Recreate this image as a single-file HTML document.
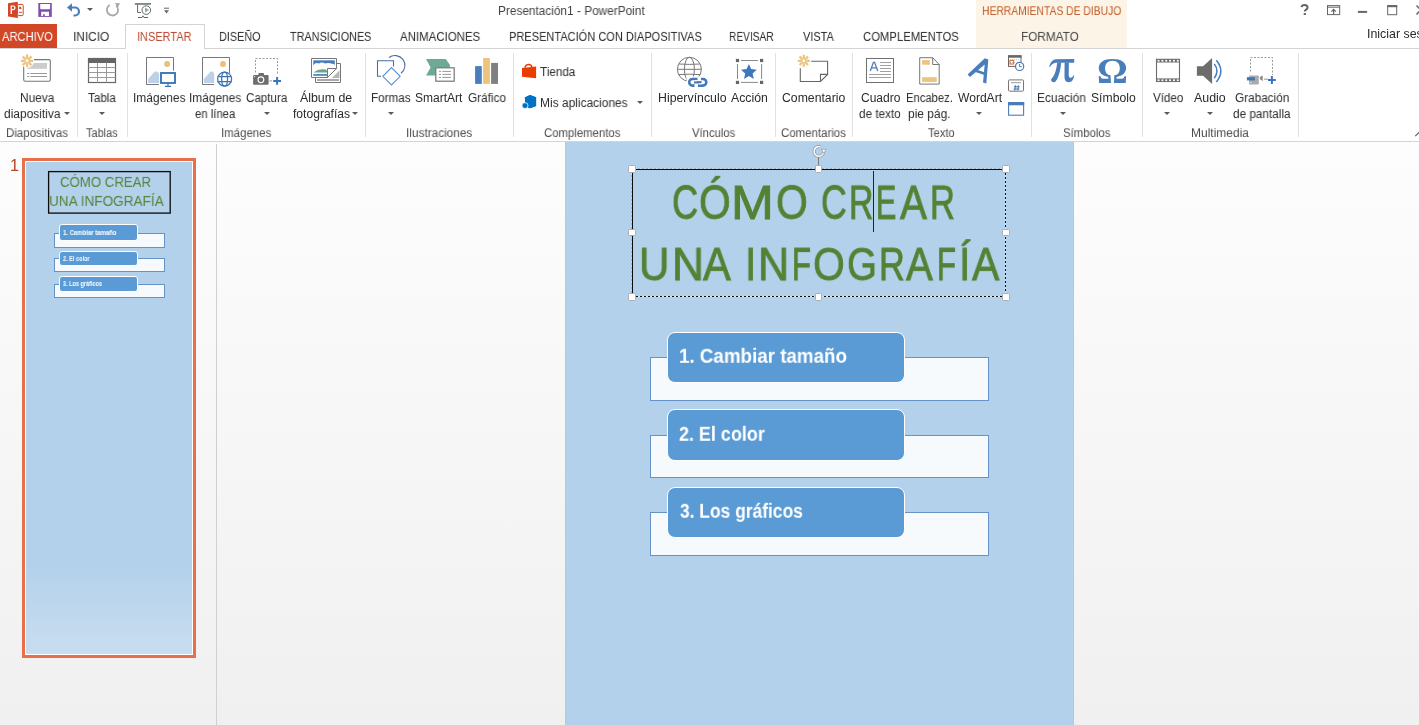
<!DOCTYPE html>
<html><head><meta charset="utf-8">
<style>
html,body{margin:0;padding:0;width:1419px;height:725px;overflow:hidden;background:#fff;}
body{position:relative;font-family:"Liberation Sans",sans-serif;}
.t{position:absolute;white-space:nowrap;will-change:transform;}
svg{position:absolute;overflow:visible}
</style></head><body>
<div style="position:absolute;left:0;top:142px;width:216px;height:583px;background:linear-gradient(#FDFDFD,#F0F0F0)"></div>
<div style="position:absolute;left:216px;top:144px;width:1px;height:581px;background:#D0D0D0"></div>
<div style="position:absolute;left:217px;top:142px;width:1202px;height:583px;background:linear-gradient(#FDFDFD,#F0F0F0)"></div>
<div style="position:absolute;left:565px;top:142px;width:509px;height:600px;background:#BFC7CE"></div>
<div style="position:absolute;left:566px;top:142px;width:507px;height:600px;background:#B4D1EB;overflow:hidden"><span class="t" style="left:105.90px;top:38.900000000000006px;font-size:45px;line-height:45px;color:#548235;transform:scale(0.8074,1.0530);transform-origin:0 38px;-webkit-text-stroke:0.9px #548235;">C</span>
<span class="t" style="left:133.14px;top:38.900000000000006px;font-size:45px;line-height:45px;color:#548235;transform:scale(0.9045,1.0530);transform-origin:0 38px;-webkit-text-stroke:0.9px #548235;">Ó</span>
<span class="t" style="left:165.23px;top:38.900000000000006px;font-size:45px;line-height:45px;color:#548235;transform:scale(1.1427,1.0530);transform-origin:0 38px;-webkit-text-stroke:0.9px #548235;">M</span>
<span class="t" style="left:210.33px;top:38.900000000000006px;font-size:45px;line-height:45px;color:#548235;transform:scale(0.9078,1.0530);transform-origin:0 38px;-webkit-text-stroke:0.9px #548235;">O</span>
<span class="t" style="left:255.13px;top:38.900000000000006px;font-size:45px;line-height:45px;color:#548235;transform:scale(0.7934,1.0530);transform-origin:0 38px;-webkit-text-stroke:0.9px #548235;">C</span>
<span class="t" style="left:282.98px;top:38.900000000000006px;font-size:45px;line-height:45px;color:#548235;transform:scale(0.7495,1.0530);transform-origin:0 38px;-webkit-text-stroke:0.9px #548235;">R</span>
<span class="t" style="left:310.35px;top:38.900000000000006px;font-size:45px;line-height:45px;color:#548235;transform:scale(0.6765,1.0530);transform-origin:0 38px;-webkit-text-stroke:0.9px #548235;">E</span>
<span class="t" style="left:333.57px;top:38.900000000000006px;font-size:45px;line-height:45px;color:#548235;transform:scale(0.8949,1.0530);transform-origin:0 38px;-webkit-text-stroke:0.9px #548235;">A</span>
<span class="t" style="left:364.12px;top:38.900000000000006px;font-size:45px;line-height:45px;color:#548235;transform:scale(0.7682,1.0530);transform-origin:0 38px;-webkit-text-stroke:0.9px #548235;">R</span>
<span class="t" style="left:72.91px;top:99.60000000000002px;font-size:45px;line-height:45px;color:#548235;transform:scale(0.9351,1.0465);transform-origin:0 38px;-webkit-text-stroke:0.9px #548235;">U</span>
<span class="t" style="left:105.71px;top:99.60000000000002px;font-size:45px;line-height:45px;color:#548235;transform:scale(0.9859,1.0465);transform-origin:0 38px;-webkit-text-stroke:0.9px #548235;">N</span>
<span class="t" style="left:136.97px;top:99.60000000000002px;font-size:45px;line-height:45px;color:#548235;transform:scale(0.9251,1.0465);transform-origin:0 38px;-webkit-text-stroke:0.9px #548235;">A</span>
<span class="t" style="left:178.83px;top:99.60000000000002px;font-size:45px;line-height:45px;color:#548235;transform:scale(0.8983,1.0465);transform-origin:0 38px;-webkit-text-stroke:0.9px #548235;">I</span>
<span class="t" style="left:191.51px;top:99.60000000000002px;font-size:45px;line-height:45px;color:#548235;transform:scale(0.9581,1.0465);transform-origin:0 38px;-webkit-text-stroke:0.9px #548235;">N</span>
<span class="t" style="left:226.20px;top:99.60000000000002px;font-size:45px;line-height:45px;color:#548235;transform:scale(0.6908,1.0465);transform-origin:0 38px;-webkit-text-stroke:0.9px #548235;">F</span>
<span class="t" style="left:246.53px;top:99.60000000000002px;font-size:45px;line-height:45px;color:#548235;transform:scale(0.9078,1.0465);transform-origin:0 38px;-webkit-text-stroke:0.9px #548235;">O</span>
<span class="t" style="left:280.72px;top:99.60000000000002px;font-size:45px;line-height:45px;color:#548235;transform:scale(0.8576,1.0465);transform-origin:0 38px;-webkit-text-stroke:0.9px #548235;">G</span>
<span class="t" style="left:313.12px;top:99.60000000000002px;font-size:45px;line-height:45px;color:#548235;transform:scale(0.7945,1.0465);transform-origin:0 38px;-webkit-text-stroke:0.9px #548235;">R</span>
<span class="t" style="left:340.07px;top:99.60000000000002px;font-size:45px;line-height:45px;color:#548235;transform:scale(0.8916,1.0465);transform-origin:0 38px;-webkit-text-stroke:0.9px #548235;">A</span>
<span class="t" style="left:371.10px;top:99.60000000000002px;font-size:45px;line-height:45px;color:#548235;transform:scale(0.6908,1.0465);transform-origin:0 38px;-webkit-text-stroke:0.9px #548235;">F</span>
<span class="t" style="left:392.73px;top:99.60000000000002px;font-size:45px;line-height:45px;color:#548235;transform:scale(0.8983,1.0465);transform-origin:0 38px;-webkit-text-stroke:0.9px #548235;">Í</span>
<span class="t" style="left:405.77px;top:99.60000000000002px;font-size:45px;line-height:45px;color:#548235;transform:scale(0.9117,1.0465);transform-origin:0 38px;-webkit-text-stroke:0.9px #548235;">A</span>
<div style="position:absolute;left:84px;top:215px;width:339px;height:44px;background:#F7FAFD;border:1px solid #6593C8;box-sizing:border-box"></div>
<div style="position:absolute;left:101px;top:190px;width:238px;height:51px;background:#5B9BD5;border:1px solid #fff;border-radius:8px;box-sizing:border-box"></div>
<span class="t" style="left:112.72px;top:205px;font-size:19px;line-height:19px;color:#fff;font-weight:bold;transform:scale(0.9878,1.0710);transform-origin:0 16px;">1. Cambiar tamaño</span>
<div style="position:absolute;left:84px;top:293px;width:339px;height:43px;background:#F7FAFD;border:1px solid #6593C8;box-sizing:border-box"></div>
<div style="position:absolute;left:101px;top:267px;width:238px;height:52px;background:#5B9BD5;border:1px solid #fff;border-radius:8px;box-sizing:border-box"></div>
<span class="t" style="left:113.27px;top:283px;font-size:19px;line-height:19px;color:#fff;font-weight:bold;transform:scale(0.9449,1.0710);transform-origin:0 16px;">2. El color</span>
<div style="position:absolute;left:84px;top:370px;width:339px;height:44px;background:#F7FAFD;border:1px solid #6593C8;box-sizing:border-box"></div>
<div style="position:absolute;left:101px;top:345px;width:238px;height:51px;background:#5B9BD5;border:1px solid #fff;border-radius:8px;box-sizing:border-box"></div>
<span class="t" style="left:113.50px;top:360px;font-size:19px;line-height:19px;color:#fff;font-weight:bold;transform:scale(0.9160,1.0710);transform-origin:0 16px;">3. Los gráficos</span></div>
<div style="position:absolute;left:632px;top:168px;width:374px;height:1px;background:repeating-linear-gradient(90deg,#C9D9E8 0 2.5px,#9FB6CA 2.5px 4px)"></div>
<div style="position:absolute;left:631px;top:169px;width:1px;height:128px;background:repeating-linear-gradient(180deg,#C9D9E8 0 2.5px,#9FB6CA 2.5px 4px)"></div>
<div style="position:absolute;left:632px;top:169px;width:374px;height:1px;background:#0D0D0D"></div>
<div style="position:absolute;left:632px;top:169px;width:1px;height:128px;background:#0D0D0D"></div>
<div style="position:absolute;left:632px;top:296px;width:374px;height:1px;background:repeating-linear-gradient(90deg,#0D0D0D 0 2.5px,#D8E4EE 2.5px 4px)"></div>
<div style="position:absolute;left:1005px;top:169px;width:1px;height:128px;background:repeating-linear-gradient(180deg,#0D0D0D 0 2.5px,#D8E4EE 2.5px 4px)"></div>
<div style="position:absolute;left:818px;top:157px;width:1px;height:9px;background:#7A7A7A"></div>
<svg style="left:810px;top:143px" width="18" height="17" viewBox="810 143 18 17"><path d="M823.7 150.7 A4.85 4.85 0 1 1 820.6 146.9" fill="none" stroke="#8A9199" stroke-width="2.9"/><path d="M823.7 150.7 A4.85 4.85 0 1 1 820.6 146.9" fill="none" stroke="#fff" stroke-width="1.5"/><path d="M821.3 149.3 L826.3 149.3 L823.8 153.2 Z" fill="#fff" stroke="#8A9199" stroke-width="0.7"/></svg>
<div style="position:absolute;left:628.2px;top:165.2px;width:7.6px;height:7.6px;box-sizing:border-box;border:1px solid #A8AEB4;background:#fff;border-radius:1.5px"></div>
<div style="position:absolute;left:628.2px;top:228.9px;width:7.6px;height:7.6px;box-sizing:border-box;border:1px solid #A8AEB4;background:#fff;border-radius:1.5px"></div>
<div style="position:absolute;left:628.2px;top:293.1px;width:7.6px;height:7.6px;box-sizing:border-box;border:1px solid #A8AEB4;background:#fff;border-radius:1.5px"></div>
<div style="position:absolute;left:814.7px;top:165.2px;width:7.6px;height:7.6px;box-sizing:border-box;border:1px solid #A8AEB4;background:#fff;border-radius:1.5px"></div>
<div style="position:absolute;left:814.7px;top:293.1px;width:7.6px;height:7.6px;box-sizing:border-box;border:1px solid #A8AEB4;background:#fff;border-radius:1.5px"></div>
<div style="position:absolute;left:1002.1px;top:165.2px;width:7.6px;height:7.6px;box-sizing:border-box;border:1px solid #A8AEB4;background:#fff;border-radius:1.5px"></div>
<div style="position:absolute;left:1002.1px;top:228.9px;width:7.6px;height:7.6px;box-sizing:border-box;border:1px solid #A8AEB4;background:#fff;border-radius:1.5px"></div>
<div style="position:absolute;left:1002.1px;top:293.1px;width:7.6px;height:7.6px;box-sizing:border-box;border:1px solid #A8AEB4;background:#fff;border-radius:1.5px"></div>
<div style="position:absolute;left:873px;top:171px;width:1px;height:61px;background:#222"></div>
<div style="position:absolute;left:22px;top:158px;width:174px;height:500px;background:#E5704B"></div>
<div style="position:absolute;left:25px;top:161px;width:168px;height:494px;background:#fff"></div>
<div style="position:absolute;left:26px;top:162px;width:166px;height:492px;background:linear-gradient(#B4D1EB 0%,#B4D1EB 82%,#C9DDF0 100%)"></div>
<svg style="left:0;top:142px" width="216" height="200" viewBox="0 142 216 200"><rect x="48.6" y="171.6" width="121.6" height="41.5" fill="none" stroke="#0A0A0A" stroke-width="1.3"/></svg>
<span class="t" style="left:59.53px;top:173.9px;font-size:15px;line-height:15px;color:#55823A;transform:scale(0.8806,1.0078);transform-origin:0 13px;">CÓMO CREAR</span>
<span class="t" style="left:49.35px;top:193px;font-size:15px;line-height:15px;color:#55823A;transform:scale(0.9060,1.0078);transform-origin:0 13px;">UNA INFOGRAFÍA</span>
<div style="position:absolute;left:54.2px;top:233px;width:110.5px;height:14.6px;background:#F7FAFD;border:1px solid #6593C8;box-sizing:border-box"></div>
<div style="position:absolute;left:59.4px;top:224.4px;width:78.2px;height:16.6px;background:#5B9BD5;border:1px solid #fff;border-radius:3px;box-sizing:border-box"></div>
<span class="t" style="left:62.82px;top:228.9px;font-size:7px;line-height:7px;color:#fff;font-weight:bold;transform:scale(0.8528,0.9967);transform-origin:0 6px;">1. Cambiar tamaño</span>
<div style="position:absolute;left:54.2px;top:258px;width:110.5px;height:14.4px;background:#F7FAFD;border:1px solid #6593C8;box-sizing:border-box"></div>
<div style="position:absolute;left:59.4px;top:250.9px;width:78.2px;height:14.9px;background:#5B9BD5;border:1px solid #fff;border-radius:3px;box-sizing:border-box"></div>
<span class="t" style="left:63.01px;top:255px;font-size:7px;line-height:7px;color:#fff;font-weight:bold;transform:scale(0.7945,0.9967);transform-origin:0 6px;">2. El color</span>
<div style="position:absolute;left:54.2px;top:284px;width:110.5px;height:14.3px;background:#F7FAFD;border:1px solid #6593C8;box-sizing:border-box"></div>
<div style="position:absolute;left:59.4px;top:276px;width:78.2px;height:15.7px;background:#5B9BD5;border:1px solid #fff;border-radius:3px;box-sizing:border-box"></div>
<span class="t" style="left:63.07px;top:280.2px;font-size:7px;line-height:7px;color:#fff;font-weight:bold;transform:scale(0.7885,0.9967);transform-origin:0 6px;">3. Los gráficos</span>
<span class="t" style="left:9.57px;top:158px;font-size:15px;line-height:15px;color:#B7472A;transform:scale(1.0828,1.0465);transform-origin:0 13px;">1</span>
<span class="t" style="left:498.33px;top:5px;font-size:12px;line-height:12px;color:#444;transform:scale(0.9859,1.0000);transform-origin:0 10px;">Presentación1 - PowerPoint</span>
<div style="position:absolute;left:976px;top:0;width:151px;height:48px;background:#FDF4E8"></div>
<span class="t" style="left:981.75px;top:5px;font-size:12px;line-height:12px;color:#C05A22;transform:scale(0.8606,0.9690);transform-origin:0 10px;">HERRAMIENTAS DE DIBUJO</span>
<span class="t" style="left:1021.44px;top:30px;font-size:13px;line-height:13px;color:#444;transform:scale(0.9050,1.0063);transform-origin:0 11px;">FORMATO</span>
<div style="position:absolute;left:0;top:48px;width:1419px;height:1px;background:#D4D4D4"></div>
<div style="position:absolute;left:0;top:24px;width:57px;height:24px;background:#D24726"></div>
<div style="position:absolute;left:125px;top:24px;width:80px;height:25px;border:1px solid #D4D4D4;border-bottom:none;background:#fff;box-sizing:border-box"></div>
<span class="t" style="left:2.08px;top:30px;font-size:13px;line-height:13px;color:#fff;transform:scale(0.8587,1.0063);transform-origin:0 11px;">ARCHIVO</span>
<span class="t" style="left:72.86px;top:30px;font-size:13px;line-height:13px;color:#2A2A2A;transform:scale(0.9141,1.0063);transform-origin:0 11px;">INICIO</span>
<span class="t" style="left:136.89px;top:30px;font-size:13px;line-height:13px;color:#B8442A;transform:scale(0.8450,1.0063);transform-origin:0 11px;">INSERTAR</span>
<span class="t" style="left:219.41px;top:30px;font-size:13px;line-height:13px;color:#2A2A2A;transform:scale(0.8328,1.0063);transform-origin:0 11px;">DISEÑO</span>
<span class="t" style="left:290.06px;top:30px;font-size:13px;line-height:13px;color:#2A2A2A;transform:scale(0.8352,1.0063);transform-origin:0 11px;">TRANSICIONES</span>
<span class="t" style="left:400.08px;top:30px;font-size:13px;line-height:13px;color:#2A2A2A;transform:scale(0.8817,1.0063);transform-origin:0 11px;">ANIMACIONES</span>
<span class="t" style="left:508.60px;top:30px;font-size:13px;line-height:13px;color:#2A2A2A;transform:scale(0.8487,1.0063);transform-origin:0 11px;">PRESENTACIÓN CON DIAPOSITIVAS</span>
<span class="t" style="left:729.47px;top:30px;font-size:13px;line-height:13px;color:#2A2A2A;transform:scale(0.7817,1.0063);transform-origin:0 11px;">REVISAR</span>
<span class="t" style="left:802.85px;top:30px;font-size:13px;line-height:13px;color:#2A2A2A;transform:scale(0.8410,1.0063);transform-origin:0 11px;">VISTA</span>
<span class="t" style="left:862.82px;top:30px;font-size:13px;line-height:13px;color:#2A2A2A;transform:scale(0.8687,1.0063);transform-origin:0 11px;">COMPLEMENTOS</span>
<span class="t" style="left:1366.96px;top:28px;font-size:12px;line-height:12px;color:#2A2A2A;transform:scale(1.0330,1.0659);transform-origin:0 10px;">Iniciar sesión</span>
<div style="position:absolute;left:0;top:141px;width:1419px;height:1px;background:#D4D4D4"></div>
<div style="position:absolute;left:77px;top:53px;width:1px;height:84px;background:#E1E1E1"></div>
<div style="position:absolute;left:127px;top:53px;width:1px;height:84px;background:#E1E1E1"></div>
<div style="position:absolute;left:365px;top:53px;width:1px;height:84px;background:#E1E1E1"></div>
<div style="position:absolute;left:513px;top:53px;width:1px;height:84px;background:#E1E1E1"></div>
<div style="position:absolute;left:651px;top:53px;width:1px;height:84px;background:#E1E1E1"></div>
<div style="position:absolute;left:775px;top:53px;width:1px;height:84px;background:#E1E1E1"></div>
<div style="position:absolute;left:852px;top:53px;width:1px;height:84px;background:#E1E1E1"></div>
<div style="position:absolute;left:1031px;top:53px;width:1px;height:84px;background:#E1E1E1"></div>
<div style="position:absolute;left:1142px;top:53px;width:1px;height:84px;background:#E1E1E1"></div>
<div style="position:absolute;left:1298px;top:53px;width:1px;height:84px;background:#E1E1E1"></div>
<span class="t" style="left:19.53px;top:92px;font-size:12px;line-height:12px;color:#2A2A2A;transform:scale(0.9882,1.0901);transform-origin:0 10px;">Nueva</span>
<span class="t" style="left:4.20px;top:108px;font-size:12px;line-height:12px;color:#2A2A2A;transform:scale(0.9965,1.0901);transform-origin:0 10px;">diapositiva</span>
<span class="t" style="left:87.74px;top:92px;font-size:12px;line-height:12px;color:#2A2A2A;transform:scale(0.9713,1.0901);transform-origin:0 10px;">Tabla</span>
<span class="t" style="left:132.60px;top:92px;font-size:12px;line-height:12px;color:#2A2A2A;transform:scale(0.9967,1.0901);transform-origin:0 10px;">Imágenes</span>
<span class="t" style="left:188.71px;top:92px;font-size:12px;line-height:12px;color:#2A2A2A;transform:scale(0.9909,1.0901);transform-origin:0 10px;">Imágenes</span>
<span class="t" style="left:195.12px;top:108px;font-size:12px;line-height:12px;color:#2A2A2A;transform:scale(0.9433,1.0901);transform-origin:0 10px;">en línea</span>
<span class="t" style="left:246.11px;top:92px;font-size:12px;line-height:12px;color:#2A2A2A;transform:scale(0.9674,1.0901);transform-origin:0 10px;">Captura</span>
<span class="t" style="left:300.38px;top:92px;font-size:12px;line-height:12px;color:#2A2A2A;transform:scale(1.0292,1.0901);transform-origin:0 10px;">Álbum de</span>
<span class="t" style="left:293.13px;top:108px;font-size:12px;line-height:12px;color:#2A2A2A;transform:scale(1.0071,1.0901);transform-origin:0 10px;">fotografías</span>
<span class="t" style="left:371.34px;top:92px;font-size:12px;line-height:12px;color:#2A2A2A;transform:scale(0.9732,1.0901);transform-origin:0 10px;">Formas</span>
<span class="t" style="left:415.45px;top:92px;font-size:12px;line-height:12px;color:#2A2A2A;transform:scale(1.0021,1.0901);transform-origin:0 10px;">SmartArt</span>
<span class="t" style="left:467.81px;top:92px;font-size:12px;line-height:12px;color:#2A2A2A;transform:scale(0.9821,1.0901);transform-origin:0 10px;">Gráfico</span>
<span class="t" style="left:540.34px;top:66px;font-size:12px;line-height:12px;color:#2A2A2A;transform:scale(0.9757,1.0901);transform-origin:0 10px;">Tienda</span>
<span class="t" style="left:539.62px;top:96.5px;font-size:12px;line-height:12px;color:#2A2A2A;transform:scale(0.9952,1.0901);transform-origin:0 10px;">Mis aplicaciones</span>
<span class="t" style="left:657.59px;top:92px;font-size:12px;line-height:12px;color:#2A2A2A;transform:scale(1.0275,1.0901);transform-origin:0 10px;">Hipervínculo</span>
<span class="t" style="left:731.38px;top:92px;font-size:12px;line-height:12px;color:#2A2A2A;transform:scale(1.0225,1.0901);transform-origin:0 10px;">Acción</span>
<span class="t" style="left:782.08px;top:92px;font-size:12px;line-height:12px;color:#2A2A2A;transform:scale(1.0195,1.0901);transform-origin:0 10px;">Comentario</span>
<span class="t" style="left:860.89px;top:92px;font-size:12px;line-height:12px;color:#2A2A2A;transform:scale(1.0015,1.0901);transform-origin:0 10px;">Cuadro</span>
<span class="t" style="left:859.21px;top:108px;font-size:12px;line-height:12px;color:#2A2A2A;transform:scale(0.9763,1.0901);transform-origin:0 10px;">de texto</span>
<span class="t" style="left:905.58px;top:92px;font-size:12px;line-height:12px;color:#2A2A2A;transform:scale(0.9361,1.0901);transform-origin:0 10px;">Encabez.</span>
<span class="t" style="left:907.83px;top:108px;font-size:12px;line-height:12px;color:#2A2A2A;transform:scale(0.9964,1.0901);transform-origin:0 10px;">pie pág.</span>
<span class="t" style="left:957.54px;top:92px;font-size:12px;line-height:12px;color:#2A2A2A;transform:scale(1.0059,1.0901);transform-origin:0 10px;">WordArt</span>
<span class="t" style="left:1037.33px;top:92px;font-size:12px;line-height:12px;color:#2A2A2A;transform:scale(0.9894,1.0901);transform-origin:0 10px;">Ecuación</span>
<span class="t" style="left:1090.84px;top:92px;font-size:12px;line-height:12px;color:#2A2A2A;transform:scale(1.0149,1.0901);transform-origin:0 10px;">Símbolo</span>
<span class="t" style="left:1153.14px;top:92px;font-size:12px;line-height:12px;color:#2A2A2A;transform:scale(0.9678,1.0901);transform-origin:0 10px;">Vídeo</span>
<span class="t" style="left:1194.38px;top:92px;font-size:12px;line-height:12px;color:#2A2A2A;transform:scale(1.0346,1.0901);transform-origin:0 10px;">Audio</span>
<span class="t" style="left:1234.81px;top:92px;font-size:12px;line-height:12px;color:#2A2A2A;transform:scale(0.9817,1.0901);transform-origin:0 10px;">Grabación</span>
<span class="t" style="left:1233.11px;top:108px;font-size:12px;line-height:12px;color:#2A2A2A;transform:scale(0.9792,1.0901);transform-origin:0 10px;">de pantalla</span>
<span class="t" style="left:1096.87px;top:52.900000000000006px;font-size:36px;line-height:36px;font-family:'Liberation Serif';font-weight:bold;color:#4A7EBB;transform:scale(1.0705,1.0070);transform-origin:0 30px;">Ω</span>
<span class="t" style="left:5.76px;top:127px;font-size:12px;line-height:12px;color:#4A4A4A;transform:scale(0.9577,0.9690);transform-origin:0 10px;">Diapositivas</span>
<span class="t" style="left:86.06px;top:127px;font-size:12px;line-height:12px;color:#4A4A4A;transform:scale(0.9119,0.9690);transform-origin:0 10px;">Tablas</span>
<span class="t" style="left:220.85px;top:127px;font-size:12px;line-height:12px;color:#4A4A4A;transform:scale(0.9537,0.9690);transform-origin:0 10px;">Imágenes</span>
<span class="t" style="left:405.71px;top:127px;font-size:12px;line-height:12px;color:#4A4A4A;transform:scale(0.9843,0.9690);transform-origin:0 10px;">Ilustraciones</span>
<span class="t" style="left:544.22px;top:127px;font-size:12px;line-height:12px;color:#4A4A4A;transform:scale(0.9466,0.9690);transform-origin:0 10px;">Complementos</span>
<span class="t" style="left:691.54px;top:127px;font-size:12px;line-height:12px;color:#4A4A4A;transform:scale(0.9401,0.9690);transform-origin:0 10px;">Vínculos</span>
<span class="t" style="left:781.12px;top:127px;font-size:12px;line-height:12px;color:#4A4A4A;transform:scale(0.9540,0.9690);transform-origin:0 10px;">Comentarios</span>
<span class="t" style="left:928.26px;top:127px;font-size:12px;line-height:12px;color:#4A4A4A;transform:scale(0.9279,0.9690);transform-origin:0 10px;">Texto</span>
<span class="t" style="left:1062.58px;top:127px;font-size:12px;line-height:12px;color:#4A4A4A;transform:scale(0.9484,0.9690);transform-origin:0 10px;">Símbolos</span>
<span class="t" style="left:1190.82px;top:127px;font-size:12px;line-height:12px;color:#4A4A4A;transform:scale(0.9976,0.9690);transform-origin:0 10px;">Multimedia</span>
<div style="position:absolute;left:63.5px;top:112.0px;width:0;height:0;border-left:3.0px solid transparent;border-right:3.0px solid transparent;border-top:3.5px solid #5A5A5A"></div>
<div style="position:absolute;left:98.5px;top:112.0px;width:0;height:0;border-left:3.0px solid transparent;border-right:3.0px solid transparent;border-top:3.5px solid #5A5A5A"></div>
<div style="position:absolute;left:264.2px;top:112.0px;width:0;height:0;border-left:3.0px solid transparent;border-right:3.0px solid transparent;border-top:3.5px solid #5A5A5A"></div>
<div style="position:absolute;left:352.3px;top:112.0px;width:0;height:0;border-left:3.0px solid transparent;border-right:3.0px solid transparent;border-top:3.5px solid #5A5A5A"></div>
<div style="position:absolute;left:388.3px;top:112.0px;width:0;height:0;border-left:3.0px solid transparent;border-right:3.0px solid transparent;border-top:3.5px solid #5A5A5A"></div>
<div style="position:absolute;left:636.6px;top:101.0px;width:0;height:0;border-left:3.0px solid transparent;border-right:3.0px solid transparent;border-top:3.5px solid #5A5A5A"></div>
<div style="position:absolute;left:976.4px;top:112.0px;width:0;height:0;border-left:3.0px solid transparent;border-right:3.0px solid transparent;border-top:3.5px solid #5A5A5A"></div>
<div style="position:absolute;left:1059.7px;top:112.0px;width:0;height:0;border-left:3.0px solid transparent;border-right:3.0px solid transparent;border-top:3.5px solid #5A5A5A"></div>
<div style="position:absolute;left:1164.0px;top:112.0px;width:0;height:0;border-left:3.0px solid transparent;border-right:3.0px solid transparent;border-top:3.5px solid #5A5A5A"></div>
<div style="position:absolute;left:1206.5px;top:112.0px;width:0;height:0;border-left:3.0px solid transparent;border-right:3.0px solid transparent;border-top:3.5px solid #5A5A5A"></div>
<div style="position:absolute;left:86.5px;top:8.0px;width:0;height:0;border-left:3.0px solid transparent;border-right:3.0px solid transparent;border-top:3.5px solid #5A5A5A"></div>
<svg style="left:0;top:0" width="1419" height="142" viewBox="0 0 1419 142"><path d="M8 3.3 L17.8 1.8 L17.8 17.9 L8 16.6 Z" fill="#D24726"/>
<rect x="17.6" y="4.4" width="5.6" height="11.2" rx="1" fill="#fff" stroke="#D24726" stroke-width="1"/>
<path d="M10.6 14 V5.4 H13.2 Q15.6 5.4 15.6 7.8 Q15.6 10.2 13.2 10.2 H11.9 V14 Z M11.9 6.6 V9.0 H13.0 Q14.3 9.0 14.3 7.8 Q14.3 6.6 13.0 6.6 Z" fill="#fff" fill-rule="evenodd"/>
<path d="M19.2 6.5 A2.4 2.4 0 0 1 21.6 8.9 L19.2 8.9 Z" fill="#D24726"/>
<path d="M19 12.3 H22" stroke="#D24726" stroke-width="1"/>
<path d="M38.3 3 H51.8 V16.9 H38.3 Z" fill="#8050AA"/>
<path d="M40.2 4 H50.1 V8.3 Q50.1 9.3 49.1 9.3 H41.2 Q40.2 9.3 40.2 8.3 Z" fill="#fff"/>
<path d="M41.2 11.8 H49 V15.9 H44.8 V14.2 H43.1 V15.9 H41.2 Z" fill="#fff"/>
<path d="M69.5 7.5 H75 A4 4 0 0 1 75 15.5 H73.5" fill="none" stroke="#4A7EBB" stroke-width="2.2"/>
<path d="M67 7.5 L72 3.2 L72 11.8 Z" fill="#4A7EBB"/>
<path d="M116.3 5.8 A5.6 5.6 0 1 1 109.8 5" fill="none" stroke="#A8A8A8" stroke-width="1.8"/>
<path d="M115 3 L120 3.2 L117.6 8 Z" fill="#A8A8A8"/>
<path d="M134.8 3.2 H151 V4.7 H134.8 Z" fill="#666"/>
<path d="M137.6 4.7 V12.5 H141" fill="none" stroke="#666" stroke-width="1"/>
<circle cx="146.3" cy="10.1" r="4.3" fill="#fff" stroke="#666" stroke-width="1"/>
<path d="M145 7.6 L149 10.1 L145 12.6 Z" fill="#7FB39B"/>
<path d="M138 17.5 H142 L143 15.8 L144 17.5 H148" fill="none" stroke="#666" stroke-width="1"/>
<path d="M164 8.2 H169" stroke="#666" stroke-width="1"/>
<path d="M164 10.2 H169 L166.5 13.5 Z" fill="#666"/>
<path d="M1301.6 7.2 Q1301.8 5 1304.5 5 Q1307.6 5 1307.6 7.5 Q1307.6 9 1305.6 10 Q1304.8 10.5 1304.8 11.5" fill="none" stroke="#666" stroke-width="2"/>
<rect x="1303.7" y="13" width="2.2" height="2" fill="#666"/>
<rect x="1327.5" y="5.6" width="12.2" height="9" fill="none" stroke="#666" stroke-width="1"/>
<path d="M1327.5 7.2 H1339.7" stroke="#666" stroke-width="1"/>
<path d="M1333.6 14.6 V9.5 M1331.4 11.6 L1333.6 9.4 L1335.8 11.6" fill="none" stroke="#666" stroke-width="1.2"/>
<rect x="1357.9" y="10.9" width="9.2" height="2" fill="#666"/>
<rect x="1387.7" y="5.7" width="9" height="9" fill="none" stroke="#666" stroke-width="1"/>
<rect x="1387.2" y="5.2" width="10" height="2" fill="#666"/>
<path d="M1416.5 5.5 L1425 14.5 M1425 5.5 L1416.5 14.5" stroke="#666" stroke-width="1.5"/>
<rect x="23.7" y="59.6" width="26.6" height="21.6" rx="1.5" fill="#fff" stroke="#777" stroke-width="1.1"/>
<rect x="27.1" y="63" width="19.9" height="5.8" fill="#CCCCCC"/>
<path d="M27.1 73.5 H29.2 M30.3 73.5 H47 M27.1 76.5 H29.2 M30.3 76.5 H47" stroke="#999" stroke-width="1"/>
<circle cx="27.1" cy="60.8" r="7.10" fill="#fff"/><path d="M29.89 60.80 L33.30 60.80 M29.07 62.77 L31.48 65.18 M27.10 63.59 L27.10 67.00 M25.13 62.77 L22.72 65.18 M24.31 60.80 L20.90 60.80 M25.13 58.83 L22.72 56.42 M27.10 58.01 L27.10 54.60 M29.07 58.83 L31.48 56.42 " stroke="#EDC47F" stroke-width="2.3" stroke-linecap="butt"/><circle cx="27.1" cy="60.8" r="2.23" fill="#fff" stroke="#EDC47F" stroke-width="1.5"/>
<rect x="88.5" y="58.5" width="27" height="24" fill="#fff" stroke="#666" stroke-width="1.2"/>
<rect x="88" y="58" width="28" height="5" fill="#666"/>
<path d="M97.5 62.5 V82.5 M106.5 62.5 V82.5 M88.5 67.5 H115.5 M88.5 72.5 H115.5 M88.5 77.5 H115.5" stroke="#9A9A9A" stroke-width="1"/>
<path d="M158.9 84.5 H146.5 V57.5 H173.5 V70.7" fill="none" stroke="#777" stroke-width="1"/><path d="M148.1 83 V79 L154.79999999999998 71.4 H156.79999999999998 L159.1 73.5 V83 Z" fill="#BDD0E6"/><circle cx="167.1" cy="64" r="3" fill="#EDC07A"/>
<rect x="161" y="73" width="14" height="10" fill="#fff" stroke="#3F74B5" stroke-width="1.9"/>
<path d="M165 86.3 H171 M168 84 V86" stroke="#3F74B5" stroke-width="1.2"/>
<path d="M214 84.5 H202.5 V57.5 H229.5 V73" fill="none" stroke="#777" stroke-width="1"/><path d="M203.9 83 V79 L210.6 71.4 H212.6 L214.2 73.5 V83 Z" fill="#BDD0E6"/><circle cx="223" cy="64" r="3" fill="#EDC07A"/>
<circle cx="224.6" cy="79.1" r="7.0" fill="#fff" stroke="#3F74B5" stroke-width="1.3"/><ellipse cx="224.6" cy="79.1" rx="2.94" ry="7.0" fill="none" stroke="#3F74B5" stroke-width="1.3"/><path d="M217.6 76.65 H231.6 M217.6 81.55 H231.6" stroke="#3F74B5" stroke-width="1.3"/>
<path d="M255.5 72.5 V58.5 H277.5 V75" fill="none" stroke="#9A9A9A" stroke-width="1" stroke-dasharray="2 1.5"/>
<rect x="253.1" y="74.9" width="15.5" height="9.9" rx="1" fill="#6D6D6D"/>
<rect x="258.4" y="73" width="5.6" height="3" rx="0.8" fill="#6D6D6D"/>
<circle cx="260.9" cy="79.8" r="2.9" fill="none" stroke="#fff" stroke-width="1.1"/>
<circle cx="254.6" cy="76.6" r="0.6" fill="#fff"/>
<path d="M269.5 80.9 H272" stroke="#9A9A9A" stroke-width="1"/>
<path d="M273.20000000000005 80.9 H281.0 M277.1 77.0 V84.80000000000001" stroke="#3A75C4" stroke-width="2"/>
<path d="M315.5 77.5 V82.5 H340.5 V63.5 H336.5" fill="#fff" stroke="#777" stroke-width="1"/>
<rect x="317" y="79" width="22" height="2" fill="#A9A9A9"/>
<path d="M339.5 70.5 V78 H332 Z" fill="#B5B5B5"/>
<path d="M311.5 58.5 H336.5 V68.5 L327.5 77.5 H311.5 Z" fill="#fff" stroke="#777" stroke-width="1"/>
<rect x="313.3" y="60.3" width="21.5" height="5.8" fill="#4A7EBB"/>
<path d="M313.3 65 Q316 61.8 319 63.5 Q322 61.6 325 63.5 Q329 62 334.8 64.6 V67.2 H313.3 Z" fill="#fff"/>
<path d="M313.3 72.5 Q319 68 326 69.6 L328 72.5 Z" fill="#6CA58F"/>
<rect x="313.3" y="74.1" width="14" height="1.7" fill="#4A7EBB"/>
<path d="M327.5 77.5 L336.5 68.5 H327.5 Z" fill="#fff" stroke="#777" stroke-width="1" stroke-linejoin="miter"/>
<path d="M393.5 66.4 V60.8 H377.5 V76.2 H381" fill="none" stroke="#4C6E9E" stroke-width="1.1"/>
<path d="M389 57.5 A9.2 9.2 0 0 1 401 73.3" fill="none" stroke="#4C6E9E" stroke-width="1.1"/>
<path d="M391.5 67.6 L400.2 76.3 L391.5 85 L382.8 76.3 Z" fill="#fff" stroke="#5B8FD0" stroke-width="1.1"/>
<path d="M426 59 H445.8 L450.3 65.5 L446 75.6 H426 L430.6 67.4 Z" fill="#6DAA94"/>
<rect x="435.8" y="67.8" width="18.4" height="13.4" fill="#fff" stroke="#777" stroke-width="1.2"/>
<path d="M439 71.4 H441 M442.3 71.4 H451 M439 74.4 H441 M442.3 74.4 H451 M439 77.4 H441 M442.3 77.4 H451" stroke="#999" stroke-width="1"/>
<rect x="475.1" y="66.1" width="6.7" height="17.8" fill="#4A7DBE"/>
<rect x="483.1" y="58" width="6.8" height="25.9" fill="#EDC47F"/>
<rect x="491.1" y="62.9" width="6.9" height="21" fill="#808080"/>
<path d="M525 67.8 A3.6 3.8 0 0 1 532 67" fill="none" stroke="#EB3C00" stroke-width="1.5"/>
<path d="M522 68.1 L536.1 66.4 V78.3 L522 76.8 Z" fill="#EB3C00"/>
<path d="M530 95 L536.1 97.3 V106 L530 108.3 L526.5 107 V99 L524 98 Z" fill="#0072C6"/>
<path d="M530 95 L536.1 97.3 L536.1 106 L530 108.3 L525 106.4 L525 97.3 Z" fill="#0072C6"/>
<circle cx="525" cy="105.6" r="3" fill="#0072C6" stroke="#fff" stroke-width="0.8"/>
<circle cx="689.4" cy="69.3" r="12.0" fill="none" stroke="#777" stroke-width="1"/><ellipse cx="689.4" cy="69.3" rx="5" ry="12.0" fill="none" stroke="#777" stroke-width="1"/><path d="M678.63 64 Q689.4 64.80 700.17 64" fill="none" stroke="#777" stroke-width="1"/><path d="M678.63 74.6 Q689.4 73.80 700.17 74.6" fill="none" stroke="#777" stroke-width="1"/><path d="M677.4 69.3 H701.4" stroke="#777" stroke-width="1"/>
<path d="M686.5 76.5 H710 V89 H686.5 Z" fill="#fff"/>
<path d="M697.5 79 H692.5 A3.3 3.3 0 0 0 692.5 85.6 H694.5" fill="none" stroke="#4478B9" stroke-width="2.6"/>
<path d="M698 85.6 H703 A3.3 3.3 0 0 0 703 79 H701" fill="none" stroke="#4478B9" stroke-width="2.6"/>
<path d="M694 82.3 L701.5 82.3" stroke="#4478B9" stroke-width="2.4"/>
<path d="M693.6 80.8 L697 80.8 M698.8 83.8 L702 83.8" stroke="#fff" stroke-width="1"/>
<path d="M741 60.5 H758 M741 82.4 H758 M737.5 64 V79 M761.6 64 V79" stroke="#8A8A8A" stroke-width="1"/>
<rect x="735.9" y="58.9" width="3.2" height="3.2" fill="#666"/>
<rect x="760.0" y="58.9" width="3.2" height="3.2" fill="#666"/>
<rect x="735.9" y="80.80000000000001" width="3.2" height="3.2" fill="#666"/>
<rect x="760.0" y="80.80000000000001" width="3.2" height="3.2" fill="#666"/>
<polygon points="748.90,63.90 751.19,69.04 756.79,69.64 752.61,73.41 753.78,78.91 748.90,76.10 744.02,78.91 745.19,73.41 741.01,69.64 746.61,69.04" fill="#3D77BD"/>
<path d="M811.2 61.3 H827.6 V74.4 L820.5 81.5 H800.3 V68.2" fill="#fff" stroke="#666" stroke-width="1.1"/>
<path d="M827.6 74.4 H820.5 V81.5" fill="none" stroke="#666" stroke-width="1.1"/>
<circle cx="803.8" cy="60.8" r="6.90" fill="#fff"/><path d="M806.50 60.80 L809.80 60.80 M805.71 62.71 L808.04 65.04 M803.80 63.50 L803.80 66.80 M801.89 62.71 L799.56 65.04 M801.10 60.80 L797.80 60.80 M801.89 58.89 L799.56 56.56 M803.80 58.10 L803.80 54.80 M805.71 58.89 L808.04 56.56 " stroke="#EDC47F" stroke-width="2.3" stroke-linecap="butt"/><circle cx="803.8" cy="60.8" r="2.16" fill="#fff" stroke="#EDC47F" stroke-width="1.5"/>
<rect x="866.5" y="58.5" width="27" height="24" fill="#fff" stroke="#707070" stroke-width="1"/>
<path d="M870.3 71 L873.4 62.4 H874.6 L877.7 71 M871.5 67.9 H876.5" fill="none" stroke="#4A7EBB" stroke-width="1.3"/>
<path d="M880 62.5 H891 M880 65.5 H891 M880 68.5 H891 M880 71.5 H891 M869 74.5 H891 M869 77.5 H891" stroke="#A0A0A0" stroke-width="1"/>
<path d="M919.7 57.7 H932.7 L939.2 64.5 V84.1 H919.7 Z" fill="#fff" stroke="#777" stroke-width="1"/>
<path d="M932.7 57.7 V64.5 H939.2" fill="none" stroke="#777" stroke-width="1"/>
<rect x="922.1" y="60.1" width="7.7" height="4.6" fill="#EDC47F"/>
<rect x="922.1" y="77.2" width="14.7" height="4.7" fill="#EDC47F"/>
<path d="M967.6 74.6 L984.8 58.2 L988.3 59.6 L986.3 83.6 L983.0 82.6 L984.7 64.4 L970.0 77.0 Z" fill="#4A7EBB"/>
<path d="M975.8 70.8 L984.8 73.8" stroke="#4A7EBB" stroke-width="2.6"/>
<rect x="1008.5" y="55.8" width="12.5" height="10.6" fill="#fff" stroke="#666" stroke-width="1"/>
<rect x="1008" y="55.3" width="13.5" height="2.4" fill="#666"/>
<path d="M1010 59.6 H1019 M1010 62.6 H1016" stroke="#C9C9C9" stroke-width="1" stroke-dasharray="1 1"/>
<rect x="1010" y="60.4" width="3.6" height="3.6" fill="none" stroke="#E07A2F" stroke-width="1.2"/>
<circle cx="1019.6" cy="66.4" r="4.1" fill="#fff" stroke="#4A7EBB" stroke-width="1.2"/>
<path d="M1019.6 64 V66.6 H1021.8" fill="none" stroke="#4A7EBB" stroke-width="1"/>
<rect x="1008.5" y="79.9" width="15" height="11.3" rx="1" fill="#fff" stroke="#777" stroke-width="1"/>
<path d="M1011 82.7 H1021" stroke="#999" stroke-width="1"/>
<path d="M1015.4 85.2 L1014.8 90.6 M1018.4 85.2 L1017.8 90.6 M1013.8 86.8 H1019.6 M1013.6 89 H1019.4" stroke="#3F74B5" stroke-width="1"/>
<rect x="1008.6" y="102.6" width="15" height="12.6" fill="#fff" stroke="#4A7EBB" stroke-width="1.1"/>
<rect x="1008" y="102.1" width="16.2" height="3.2" fill="#4A7EBB"/>
<path d="M1049.2 66.8 Q1050.6 60.2 1055.5 59.2 L1074.2 58.9 L1074.2 62.8 L1056 62.8 Q1052 63.2 1049.9 67 Z" fill="#4A7EBB"/>
<path d="M1057.2 62.6 L1061.2 62.6 Q1060.4 72.5 1057 79.4 Q1055.6 82.2 1053.3 82.2 Q1051.1 82.2 1051.1 80.1 Q1051.1 78.6 1053 77.1 Q1056.2 72.5 1057.2 62.6 Z" fill="#4A7EBB"/>
<path d="M1064.6 62.6 L1068.9 62.6 L1068.7 74.6 Q1068.7 77.9 1070.7 77.9 Q1072.6 77.9 1073.5 75.2 L1074.2 75.5 Q1073.2 82.2 1068.6 82.2 Q1064.5 82.2 1064.5 77 Z" fill="#4A7EBB"/>
<rect x="1156.5" y="59.4" width="23" height="22.1" fill="#fff" stroke="#6D6D6D" stroke-width="1.1"/>
<rect x="1156" y="58.9" width="24" height="3.6" fill="#6D6D6D"/>
<rect x="1156" y="78.4" width="24" height="3.6" fill="#6D6D6D"/>
<rect x="1157.60" y="59.9" width="1.9" height="1.7" fill="#fff"/>
<rect x="1157.60" y="79.4" width="1.9" height="1.7" fill="#fff"/>
<rect x="1161.45" y="59.9" width="1.9" height="1.7" fill="#fff"/>
<rect x="1161.45" y="79.4" width="1.9" height="1.7" fill="#fff"/>
<rect x="1165.30" y="59.9" width="1.9" height="1.7" fill="#fff"/>
<rect x="1165.30" y="79.4" width="1.9" height="1.7" fill="#fff"/>
<rect x="1169.15" y="59.9" width="1.9" height="1.7" fill="#fff"/>
<rect x="1169.15" y="79.4" width="1.9" height="1.7" fill="#fff"/>
<rect x="1173.00" y="59.9" width="1.9" height="1.7" fill="#fff"/>
<rect x="1173.00" y="79.4" width="1.9" height="1.7" fill="#fff"/>
<rect x="1176.85" y="59.9" width="1.9" height="1.7" fill="#fff"/>
<rect x="1176.85" y="79.4" width="1.9" height="1.7" fill="#fff"/>
<path d="M1196.9 66.2 H1203.1 L1212.1 58 V84.1 L1203.1 75.8 H1196.9 Z" fill="#6D6D6D"/>
<path d="M1214.3 63.9 Q1219.6 71 1214.3 78.2" fill="none" stroke="#4A7EBB" stroke-width="1.5"/>
<path d="M1216.3 60.2 Q1225.4 71 1216.3 81.9" fill="none" stroke="#4A7EBB" stroke-width="1.5"/>
<path d="M1250.5 71.5 V57.5 H1272.5 V75" fill="none" stroke="#9A9A9A" stroke-width="1" stroke-dasharray="2 1.5"/>
<rect x="1249" y="75.4" width="9.8" height="9.1" rx="0.8" fill="#ABABAB"/>
<rect x="1246.9" y="77.2" width="8" height="3.2" fill="#3F74B5"/>
<circle cx="1250.8" cy="82.5" r="0.6" fill="#fff"/>
<path d="M1259.9 77 L1262.7 75.4 V80.9 L1259.9 79.3 Z" fill="#8A8A8A"/>
<path d="M1264 79.2 H1268" stroke="#9A9A9A" stroke-width="1"/>
<path d="M1268.0 80 H1275.8000000000002 M1271.9 76.1 V83.9" stroke="#3A75C4" stroke-width="2"/>
<path d="M1415.2 136.2 L1418.8 132.6 L1422.4 136.2" fill="none" stroke="#666" stroke-width="1.2"/></svg>
</body></html>
